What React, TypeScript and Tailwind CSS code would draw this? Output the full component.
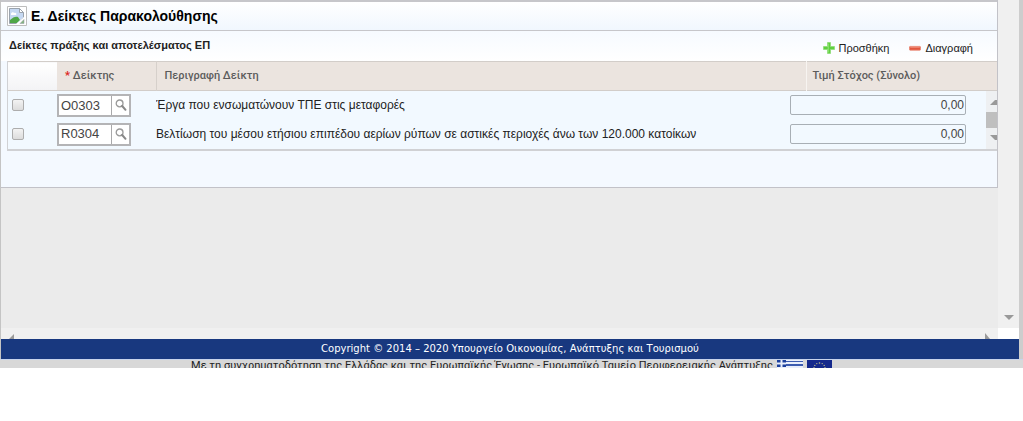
import { useState } from 'react';

const initialRows = [
  { code: 'Ο0303', description: 'Έργα που ενσωματώνουν ΤΠΕ στις μεταφορές', target: '0,00' },
  {
    code: 'R0304',
    description:
      'Βελτίωση του μέσου ετήσιου επιπέδου αερίων ρύπων σε αστικές περιοχές άνω των 120.000 κατοίκων',
    target: '0,00',
  },
];

function BrokenImageIcon() {
  return (
    <svg width="20" height="20" viewBox="0 0 20 20" aria-hidden="true" className="shrink-0">
      <path d="M.5 19.5V.5h19v19z" fill="#fff" stroke="#bdbdbd" />
      <path d="M2.5 2.5h10l4 4v5l-6 6h-8z" fill="#c5d8f2" stroke="#9aa3ad" />
      <path d="M12.5 2.5v4h4z" fill="#fff" stroke="#9aa3ad" />
      <path d="M4 8c0-2 3-2 3-1 2-1 3 1 2 2H4z" fill="#fff" />
      <path d="M3 17v-3c3-3 6-4 8-3l2 3-3 3z" fill="#4fa747" />
      <path d="M9 18l8-7v7z" fill="#fff" />
      <path d="M13 17.5h4v-4z" fill="#7fb579" stroke="#9aa3ad" strokeWidth=".6" />
    </svg>
  );
}

function SearchIcon() {
  return (
    <svg width="12" height="12" viewBox="0 0 12 12" fill="none" aria-hidden="true">
      <circle cx="4.6" cy="4.4" r="3.4" stroke="#999" strokeWidth="1.3" />
      <path d="M7.2 7l3.3 3.8" stroke="#888" strokeWidth="2" strokeLinecap="round" />
    </svg>
  );
}

function PlusIcon() {
  return (
    <svg width="12" height="12" viewBox="0 0 12 12" aria-hidden="true">
      <path d="M4.5.5h3v4h4v3h-4v4h-3v-4h-4v-3h4z" fill="#5fd03f" stroke="#8fdc78" strokeWidth=".8" />
      <path d="M5.2 1.5v9" stroke="#a4ec8c" strokeWidth=".8" />
    </svg>
  );
}

function MinusIcon() {
  return (
    <svg width="12" height="12" viewBox="0 0 12 12" aria-hidden="true">
      <rect x=".4" y="4.4" width="11.2" height="3.8" rx=".8" fill="#e2573f" stroke="#ea8b79" strokeWidth=".8" />
      <path d="M1.2 5.3h9.6" stroke="#f29a88" strokeWidth=".8" />
    </svg>
  );
}

function GreekFlag() {
  return (
    <svg width="26" height="8" viewBox="0 0 26 8" aria-hidden="true">
      <path d="M0 0h26v8H0z" fill="#e8eefb" />
      <path d="M0 0h9v7H0z" fill="#1b3f9c" />
      <path d="M3.5 0h2v8h-2zM0 2.5h9v2H0z" fill="#e8eefb" />
      <path d="M9 1h17v1H9zM9 4h17v2H9z" fill="#3c5cb0" />
    </svg>
  );
}

function EuFlag() {
  return (
    <svg width="25" height="8" viewBox="0 0 25 8" aria-hidden="true">
      <path d="M0 0h25v8H0z" fill="#15298c" />
      <g fill="#b9b887">
        <circle cx="12.5" cy="3" r=".8" />
        <circle cx="9.8" cy="3.6" r=".7" />
        <circle cx="15.2" cy="3.6" r=".7" />
        <circle cx="7.8" cy="5.4" r=".7" />
        <circle cx="17.2" cy="5.4" r=".7" />
        <circle cx="7" cy="7.6" r=".7" />
        <circle cx="18" cy="7.6" r=".7" />
      </g>
    </svg>
  );
}

export default function App() {
  const [rows, setRows] = useState(initialRows);
  const [selected, setSelected] = useState<number[]>([]);

  const update = (index: number, field: 'code' | 'target', value: string) => {
    setRows(rows.map((row, i) => (i === index ? { ...row, [field]: value } : row)));
  };

  const toggle = (index: number) => {
    setSelected(selected.includes(index) ? selected.filter((i) => i !== index) : [...selected, index]);
  };

  const addRow = () => setRows([...rows, { code: '', description: '', target: '0,00' }]);

  const removeRows = () => {
    setRows(rows.filter((_, i) => !selected.includes(i)));
    setSelected([]);
  };

  return (
    <div className="bg-white font-['Liberation_Sans',Arial,sans-serif] text-xs text-[#222]">
      <div className="border-r-4 border-[#cdcdcd]">
        <div className="flex border-l border-[#c4c4c4] bg-[#ebebeb]">
          <main className="min-h-[328px] min-w-0 flex-1">
            <section className="border-r border-b border-[#c2c2c8] bg-[#f4f9ff]">
              <header className="flex h-[31px] items-center gap-1 border-t-2 border-b border-[#c6c6ca] bg-linear-to-b from-white to-[#f1f7fe] pl-1.5">
                <BrokenImageIcon />
                <h1 className="text-sm font-bold text-black">Ε. Δείκτες Παρακολούθησης</h1>
              </header>

              <div className="flex h-[30px] justify-between bg-linear-to-b from-[#f6faff] to-white pr-6 pl-2">
                <h2 className="pt-1.5 text-[11px] leading-4 font-bold text-[#222]">Δείκτες πράξης και αποτελέσματος ΕΠ</h2>
                <div className="flex items-center gap-5 pt-1 text-[11px]">
                  <button type="button" onClick={addRow} className="flex items-center gap-1">
                    <PlusIcon />
                    Προσθήκη
                  </button>
                  <button type="button" onClick={removeRows} className="flex items-center gap-1">
                    <MinusIcon />
                    Διαγραφή
                  </button>
                </div>
              </div>

              <div className="relative ml-1.5 border-b-2 border-l border-[#d0d1d4]">
                <table className="w-full table-fixed border-collapse bg-[#f2f9ff]">
                  <colgroup>
                    <col className="w-[49px]" />
                    <col className="w-[99px]" />
                    <col />
                    <col className="w-[191px]" />
                  </colgroup>
                  <thead>
                    <tr className="h-[29px] border-y border-[#d2cdc9] bg-[#ebe4df] text-left font-['Roboto',sans-serif] text-[11px] text-[#5c5c5c]">
                      <th className="bg-linear-to-b from-white to-[#f3f3f5]" aria-label="Επιλογή" />
                      <th className="border-r border-[#d6d0cb] pl-2 font-medium">
                        <span className="font-bold text-[#d22]">*</span> Δείκτης
                      </th>
                      <th className="border-r border-[#f7f4f1] pl-2 font-medium">Περιγραφή Δείκτη</th>
                      <th className="pl-1.5 font-medium">Τιμή Στόχος (Σύνολο)</th>
                    </tr>
                  </thead>
                  <tbody>
                    {rows.map((row, i) => (
                      <tr key={i} className="h-[29px]">
                        <td className="pl-1">
                          <input
                            type="checkbox"
                            aria-label={`Επιλογή ${row.code}`}
                            checked={selected.includes(i)}
                            onChange={() => toggle(i)}
                            className="block size-3 appearance-none rounded-xs border border-[#adadad] bg-linear-to-b from-[#f3f3f3] to-[#dcdcdc] checked:from-[#777] checked:to-[#777]"
                          />
                        </td>
                        <td>
                          <div className="flex h-[23px] w-[74px] border-2 border-[#b4b4b6] bg-white">
                            <input
                              type="text"
                              aria-label="Δείκτης"
                              value={row.code}
                              onChange={(e) => update(i, 'code', e.target.value)}
                              className="min-w-0 flex-1 pl-0.5 text-[13px] text-[#444]"
                            />
                            <button
                              type="button"
                              aria-label="Αναζήτηση"
                              className="flex w-[18px] items-center justify-center border-l border-[#a9a9ab]"
                            >
                              <SearchIcon />
                            </button>
                          </div>
                        </td>
                        <td className="truncate">{row.description}</td>
                        <td className="pr-8">
                          <input
                            type="text"
                            aria-label="Τιμή Στόχος"
                            value={row.target}
                            onChange={(e) => update(i, 'target', e.target.value)}
                            className="-ml-4 block h-5 w-44 rounded-xs border border-[#a8afb5] pr-px text-right text-[#444]"
                          />
                        </td>
                      </tr>
                    ))}
                  </tbody>
                </table>
                <div className="absolute right-0 bottom-0 flex h-[58px] w-[11px] flex-col items-end justify-between bg-[#eef0f2] pt-2 pb-2">
                  <svg width="7" height="6" viewBox="0 0 7 6" aria-hidden="true">
                    <path d="M0 6l5-5h2v5z" fill="#999" />
                  </svg>
                  <div className="h-4 w-[11px] bg-[#bfbfbf]" />
                  <svg width="7" height="6" viewBox="0 0 7 6" aria-hidden="true">
                    <path d="M0 0l5 5h2V0z" fill="#999" />
                  </svg>
                </div>
              </div>
              <div className="h-9" />
            </section>
          </main>
          <div className="flex w-[21px] items-end justify-center bg-[#f0f0f0] pb-2">
            <svg width="10" height="5" viewBox="0 0 10 5" aria-hidden="true">
              <path d="M0 0h10L5 5z" fill="#999" />
            </svg>
          </div>
        </div>

        <div className="flex h-[11px] border-l border-[#c4c4c4] bg-white">
          <div className="flex flex-1 items-end justify-between bg-[#f0f0f0] pr-2 pl-2">
            <svg width="5" height="5" viewBox="0 0 5 5" aria-hidden="true">
              <path d="M0 5l5-5v5z" fill="#999" />
            </svg>
            <svg width="5" height="6" viewBox="0 0 5 6" aria-hidden="true">
              <path d="M0 6V0l5 6z" fill="#999" />
            </svg>
          </div>
          <div className="w-[21px]" />
        </div>

        <footer className="border-l border-[#c4c4c4] bg-[#18387f] text-center font-['DejaVu_Sans',Verdana,sans-serif] text-[10px] leading-5 text-white">
          Copyright © 2014 – 2020 Υπουργείο Οικονομίας, Ανάπτυξης και Τουρισμού
        </footer>
      </div>
      <div className="flex h-[9px] justify-center gap-1 overflow-hidden border-t border-[#c8d4ec] bg-[#d8d8d8]">
        <p className="font-['Roboto',sans-serif] text-[11px] leading-3">
          Με τη συγχρηματοδότηση της Ελλάδας και της Ευρωπαϊκής Ένωσης - Ευρωπαϊκό Ταμείο Περιφερειακής Ανάπτυξης
        </p>
        <GreekFlag />
        <EuFlag />
      </div>
    </div>
  );
}
